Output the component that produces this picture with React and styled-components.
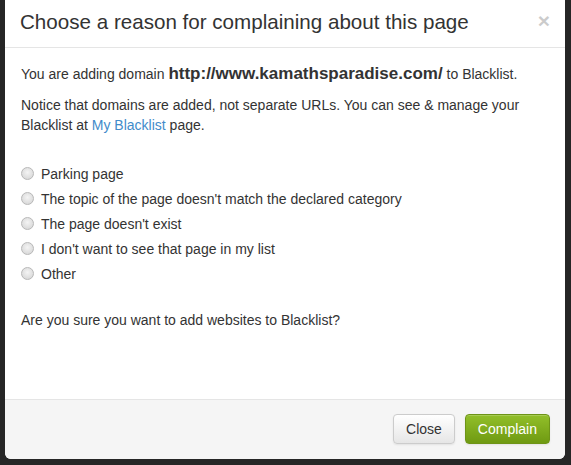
import React from "react"
import styled, { createGlobalStyle } from "styled-components"

const reasons = [
	"Parking page",
	"The topic of the page doesn't match the declared category",
	"The page doesn't exist",
	"I don't want to see that page in my list",
	"Other",
]

export default function App() {
	return (
		<>
			<Global />
			<Backdrop>
				<Modal>
					<Header>
						<Title>Choose a reason for complaining about this page</Title>
						<CloseX>×</CloseX>
					</Header>
					<Body>
						<Para>
							You are adding domain <Domain>http://www.kamathsparadise.com/</Domain> to Blacklist.
						</Para>
						<Para>
							Notice that domains are added, not separate URLs. You can see &amp; manage your
							Blacklist at <Link>My Blacklist</Link> page.
						</Para>
						<Reasons>
							{reasons.map((r) => (
								<Reason key={r}>
									<Radio />
									{r}
								</Reason>
							))}
						</Reasons>
						<Para>Are you sure you want to add websites to Blacklist?</Para>
					</Body>
					<Footer>
						<Button>Close</Button>
						<Button $primary>Complain</Button>
					</Footer>
				</Modal>
			</Backdrop>
		</>
	)
}

const Global = createGlobalStyle`
    html, body {
        margin: 0;
        padding: 0;
        background: #262626;
        font-family: "Liberation Sans", Arial, sans-serif;
    }
`

const Backdrop = styled.div`
    width: 571px;
    height: 465px;
    overflow: hidden;
    background: #262626;
    box-sizing: border-box;
    padding: 0 6px 0 5px;
`

const Modal = styled.div`
    margin-top: -6px;
    height: 465px;
    background: #fff;
    border-radius: 6px;
    display: flex;
    flex-direction: column;
    overflow: hidden;
`

const Header = styled.div`
    height: 54px;
    box-sizing: border-box;
    padding: 15px 15px 0 15px;
    border-bottom: 1px solid #e5e5e5;
    display: flex;
    justify-content: space-between;
    align-items: flex-start;
`

const Title = styled.h4`
    margin: 0;
    font-size: 20.6px;
    font-weight: normal;
    line-height: 26px;
    color: #333;
`

const CloseX = styled.span`
    font-size: 21px;
    font-weight: bold;
    line-height: 20px;
    color: #000;
    opacity: 0.2;
    margin-top: 2px;
    margin-right: 0;
`

const Body = styled.div`
    flex: 1;
    padding: 16px 16px 0 16px;
    color: #333;
    font-size: 14px;
    line-height: 20px;
`

const Para = styled.p`
    margin: 0 0 11px 0;
`

const Domain = styled.b`
    font-size: 17px;
`

const Link = styled.a`
    color: #428bca;
    text-decoration: none;
`

const Reasons = styled.div`
    margin: 26px 0 24px 0;
    display: flex;
    flex-direction: column;
`

const Reason = styled.label`
    height: 25px;
    display: flex;
    align-items: center;
    gap: 7px;
`

const Radio = styled.span`
    width: 11px;
    height: 11px;
    border-radius: 50%;
    border: 1px solid #b8b8b8;
    background: radial-gradient(circle at 50% 40%, #f4f4f4 0%, #dcdcdc 70%, #cfcfcf 100%);
`

const Footer = styled.div`
    height: 60px;
    box-sizing: border-box;
    border-top: 1px solid #e5e5e5;
    background: #f5f5f5;
    display: flex;
    justify-content: flex-end;
    align-items: flex-start;
    gap: 10px;
    padding: 14px 15px 0 0;
`

const Button = styled.button`
    height: 30px;
    padding: 0 12px;
    font-family: "Liberation Sans", Arial, sans-serif;
    font-size: 14px;
    border-radius: 4px;
    cursor: pointer;
    color: ${(p) => (p.$primary ? "#fff" : "#333")};
    border: 1px solid ${(p) => (p.$primary ? "#6e9417" : "#ccc")};
    background: ${(p) =>
		p.$primary
			? "linear-gradient(#92bf2a, #6f9a12)"
			: "linear-gradient(#ffffff, #e6e6e6)"};
    box-shadow: inset 0 1px 0 rgba(255, 255, 255, 0.2), 0 1px 2px rgba(0, 0, 0, 0.08);
`
